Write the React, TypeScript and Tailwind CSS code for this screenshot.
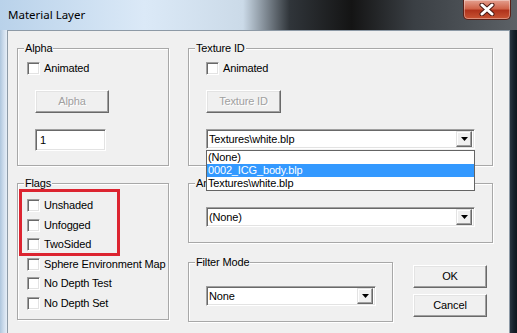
import React from 'react';

const font = { fontFamily: '"Liberation Sans", Arial, sans-serif', letterSpacing: '-0.15px' };

const Check: React.FC<{ label: string }> = ({ label }) => (
  <div className="flex items-center h-[13px]">
    <span className="w-[13px] h-[13px] bg-white border border-t-[#a0a0a0] border-l-[#a0a0a0] border-r-white border-b-white shadow-[inset_1px_1px_0_#696969,inset_-1px_-1px_0_#e3e3e3] shrink-0" />
    <span className="ml-[4px] text-[11px] leading-[13px] text-black whitespace-nowrap">{label}</span>
  </div>
);

const Button: React.FC<{ label: string; w: string; disabled?: boolean }> = ({ label, w, disabled }) => (
  <div
    className={`${w} h-[23px] flex items-center justify-center bg-[#f0f0f0] border border-t-white border-l-white border-r-[#696969] border-b-[#696969] shadow-[inset_-1px_-1px_0_#a0a0a0,inset_1px_1px_0_#e3e3e3] text-[11px] ${
      disabled ? 'text-[#a0a0a0] [text-shadow:1px_1px_0_#ffffff]' : 'text-black'
    }`}
  >
    {label}
  </div>
);

const Combo: React.FC<{ value: string; w: string }> = ({ value, w }) => (
  <div className={`${w} h-[20px] flex items-center bg-white border border-t-[#a0a0a0] border-l-[#a0a0a0] border-r-white border-b-white shadow-[inset_1px_1px_0_#696969,inset_-1px_-1px_0_#e3e3e3] pl-[2px] pr-[2px]`}>
    <span className="flex-1 text-[11px] leading-[14px] text-black whitespace-nowrap">{value}</span>
    <span className="w-[16px] h-[16px] flex items-center justify-center bg-[#f0f0f0] border border-t-[#e3e3e3] border-l-[#e3e3e3] border-r-[#696969] border-b-[#696969] shadow-[inset_-1px_-1px_0_#a0a0a0,inset_1px_1px_0_#ffffff]">
      <svg width="7" height="4" viewBox="0 0 7 4">
        <path d="M0 0h7L3.5 4z" fill="#000" />
      </svg>
    </span>
  </div>
);

const Group: React.FC<{ title: string; className: string; children?: React.ReactNode }> = ({ title, className, children }) => (
  <div className={`relative border border-[#a8a8a8] shadow-[1px_1px_0_#ffffff,inset_1px_1px_0_#ffffff] ${className}`}>
    <span className="absolute -top-[8px] left-[6px] px-[1px] bg-[#f0f0f0] text-[11px] leading-[14px] text-black">{title}</span>
    {children}
  </div>
);

export default function App() {
  return (
    <div className="w-[517px] h-[333px] overflow-hidden flex flex-col bg-[linear-gradient(to_right,#b9d2ea_0%,#dbe9f7_28%,#cbdae8_47%,#30353a_56%,#141414_68%,#3a3f44_80%,#5c6166_100%)]" style={font}>
      {/* title bar */}
      <div className="relative h-[30px] shrink-0">
        <span className="absolute left-[8px] top-[6px] text-[11.5px] tracking-normal text-black" style={{ fontFamily: '"Noto Sans", "Open Sans", sans-serif' }}>
          Material Layer
        </span>
        <div className="absolute left-[463px] top-0 w-[48px] h-[20px] rounded-b-[5px] border border-t-0 border-[#5a2018] bg-[linear-gradient(to_bottom,#e4a090_0%,#d0644a_45%,#b0331c_55%,#c85434_100%)] shadow-[inset_0_0_0_1px_rgba(255,255,255,0.35)] flex items-center justify-center">
          <svg width="16" height="13" viewBox="0 0 16 13">
            <path d="M3 2l10 9M13 2L3 11" stroke="#4a1a14" strokeWidth="5" strokeLinecap="round" />
            <path d="M3 2l10 9M13 2L3 11" stroke="#ffffff" strokeWidth="3" strokeLinecap="round" />
          </svg>
        </div>
      </div>

      {/* body with side frames */}
      <div className="flex flex-1 min-h-0">
        <div className="w-[7px] shrink-0 bg-[linear-gradient(to_right,#aec6dd,#cddcec,#e6eef7)]" />
        <div className="w-[503px] shrink-0 bg-[#f0f0f0] border-t border-l border-r border-[#8d9aa6] pl-[9px] pt-[17px] flex text-black">
          {/* left column */}
          <div className="w-[152px] shrink-0 flex flex-col">
            <Group title="Alpha" className="h-[118px] pl-[9px] pt-[13px]">
              <Check label="Animated" />
              <div className="ml-[8px] mt-[15px]">
                <Button label="Alpha" w="w-[74px]" disabled />
              </div>
              <div className="ml-[8px] mt-[16px] w-[71px] h-[22px] bg-white border border-t-[#a0a0a0] border-l-[#a0a0a0] border-r-white border-b-white shadow-[inset_1px_1px_0_#696969,inset_-1px_-1px_0_#e3e3e3] pl-[4px] flex items-center text-[11px]">
                1
              </div>
            </Group>
            <Group title="Flags" className="mt-[17px] h-[137px] pl-[9px] pt-[15px]">
              <div className="flex flex-col gap-[6.5px]">
                <Check label="Unshaded" />
                <Check label="Unfogged" />
                <Check label="TwoSided" />
                <Check label="Sphere Environment Map" />
                <Check label="No Depth Test" />
                <Check label="No Depth Set" />
              </div>
              <div className="absolute left-[1px] top-[5px] w-[101px] h-[67px] border-[3px] border-[#dc2430]" />
            </Group>
          </div>

          {/* right column */}
          <div className="ml-[19px] w-[305px] shrink-0 flex flex-col">
            <Group title="Texture ID" className="h-[118px] pl-[17px] pt-[13px]">
              <Check label="Animated" />
              <div className="mt-[15px]">
                <Button label="Texture ID" w="w-[75px]" disabled />
              </div>
              <div className="relative mt-[16px]">
                <Combo value="Textures\white.blp" w="w-[269px]" />
                <div className="absolute left-0 top-[21px] w-[269px] bg-white border border-[#646464] z-10 text-[11px] leading-[13px]">
                  <div className="h-[13px] px-[1px]">(None)</div>
                  <div className="h-[13px] px-[1px] bg-[#3399ff] text-white">0002_ICG_body.blp</div>
                  <div className="h-[13px] px-[1px]">Textures\white.blp</div>
                </div>
              </div>
            </Group>
            <Group title="An" className="mt-[17px] h-[60px] pl-[17px] pt-[23px]">
              <Combo value="(None)" w="w-[269px]" />
            </Group>
            <div className="mt-[19px] flex">
              <Group title="Filter Mode" className="w-[205px] h-[60px] pl-[17px] pt-[23px]">
                <Combo value="None" w="w-[170px]" />
              </Group>
              <div className="ml-[20px] mt-[3px] flex flex-col gap-[6px]">
                <Button label="OK" w="w-[74px]" />
                <Button label="Cancel" w="w-[74px]" />
              </div>
            </div>
          </div>
        </div>
        <div className="w-[7px] shrink-0 bg-[linear-gradient(to_right,#2a3540,#18222c,#0e151c)]" />
      </div>
    </div>
  );
}
